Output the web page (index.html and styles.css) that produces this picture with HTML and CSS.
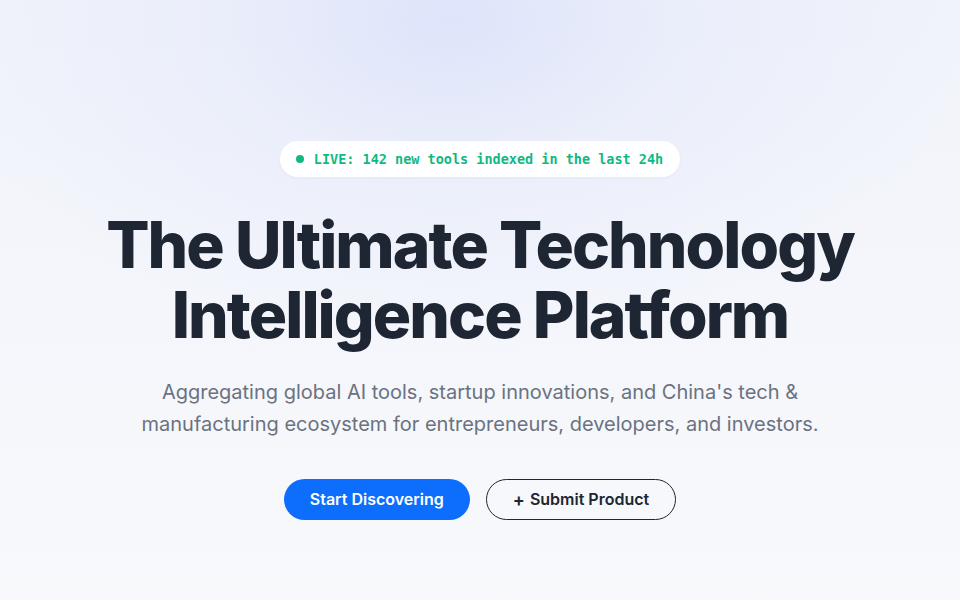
FILE: index.html
```html
<!DOCTYPE html>
<html lang="en">
<head>
<meta charset="utf-8">
<title>Technology Intelligence Platform</title>
<link rel="stylesheet" href="styles.css">
</head>
<body>
<main class="hero">
  <div class="badge"><span class="dot"></span><span class="badge-text">LIVE: 142 new tools indexed in the last 24h</span></div>
  <h1 class="title">The Ultimate Technology<br>Intelligence Platform</h1>
  <p class="subtitle">Aggregating global AI tools, startup innovations, and China's tech &amp;<br>manufacturing ecosystem for entrepreneurs, developers, and investors.</p>
  <div class="actions">
    <a class="btn btn-primary" href="#">Start Discovering</a>
    <a class="btn btn-outline" href="#"><span class="plus">+</span>Submit Product</a>
  </div>
</main>
</body>
</html>
```
FILE: styles.css
```css
html, body {
  margin: 0;
  padding: 0;
  height: 100%;
}
body {
  font-family: Inter, "Noto Sans", sans-serif;
  background:
    radial-gradient(ellipse 520px 330px at 450px 20px, rgba(222, 228, 250, 1) 0%, rgba(230, 235, 250, 0.6) 45%, rgba(240, 243, 251, 0) 100%),
    linear-gradient(180deg, #f1f3fa 0%, #f4f6fb 50%, #f8f9fb 100%);
  color: #1e2533;
}
.hero {
  display: flex;
  flex-direction: column;
  align-items: center;
  padding-top: 141px;
  text-align: center;
}
.badge {
  display: flex;
  align-items: center;
  gap: 10px;
  height: 36px;
  box-sizing: border-box;
  padding: 0 17px 0 16px;
  background: #ffffff;
  border-radius: 999px;
  box-shadow: 0 1px 3px rgba(30, 40, 80, 0.04);
}
.dot {
  width: 8px;
  height: 8px;
  border-radius: 50%;
  background: #10b981;
}
.badge-text {
  font-family: "DejaVu Sans Mono", "Liberation Mono", monospace;
  font-weight: bold;
  font-size: 13.5px;
  color: #10b981;
}
.title {
  margin: 33px 0 0;
  font-size: 64px;
  line-height: 1.1;
  font-weight: 800;
  letter-spacing: -0.03em;
  color: #1e2533;
}
.subtitle {
  margin: 25px 0 0;
  font-size: 20px;
  line-height: 32px;
  color: #6b7280;
}
.actions {
  display: flex;
  gap: 16px;
  margin-top: 39px;
}
.btn {
  display: flex;
  align-items: center;
  justify-content: center;
  height: 41px;
  box-sizing: border-box;
  padding: 0 26px;
  border-radius: 999px;
  font-size: 16px;
  font-weight: 600;
  text-decoration: none;
}
.btn-primary {
  background: #0d6efd;
  color: #ffffff;
}
.btn-outline {
  border: 1px solid #1e2533;
  color: #1e2533;
  background: transparent;
}
.plus {
  font-size: 18px;
  margin-right: 5px;
}
```
